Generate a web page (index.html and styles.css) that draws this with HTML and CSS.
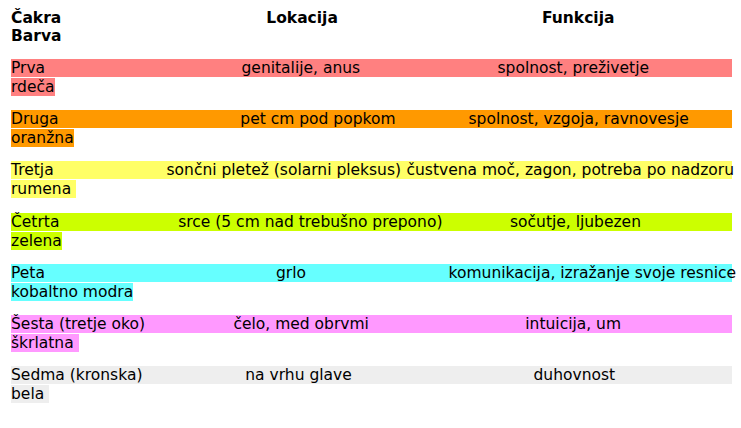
FILE: index.html
```html
<!DOCTYPE html>
<html lang="sl">
<head>
<meta charset="utf-8">
<title>Čakre</title>
<link rel="stylesheet" href="styles.css">
</head>
<body>
<div class="chart">
  <div class="group head">
    <div class="cols cols-head"><span>Čakra</span><span>Lokacija</span><span>Funkcija</span></div>
    <div class="color-line">Barva</div>
  </div>

  <div class="group">
    <div class="cols cols-1 red"><span>Prva</span><span>genitalije, anus</span><span>spolnost, preživetje</span></div>
    <div class="color-line"><span class="swatch red">rdeča</span></div>
  </div>

  <div class="group">
    <div class="cols cols-2 orange"><span>Druga</span><span>pet cm pod popkom</span><span>spolnost, vzgoja, ravnovesje</span></div>
    <div class="color-line"><span class="swatch orange">oranžna</span></div>
  </div>

  <div class="group">
    <div class="cols cols-3 yellow"><span>Tretja</span><span>sončni pletež (solarni pleksus)</span><span>čustvena moč, zagon, potreba po nadzoru</span></div>
    <div class="color-line"><span class="swatch yellow">rumena&nbsp;</span></div>
  </div>

  <div class="group">
    <div class="cols cols-4 lime"><span>Četrta</span><span>srce (5 cm nad trebušno prepono)</span><span>sočutje, ljubezen</span></div>
    <div class="color-line"><span class="swatch lime">zelena</span></div>
  </div>

  <div class="group">
    <div class="cols cols-5 cyan"><span>Peta</span><span>grlo</span><span>komunikacija, izražanje svoje resnice</span></div>
    <div class="color-line"><span class="swatch cyan">kobaltno modra</span></div>
  </div>

  <div class="group">
    <div class="cols cols-6 magenta"><span>Šesta (tretje oko)</span><span>čelo, med obrvmi</span><span>intuicija, um</span></div>
    <div class="color-line"><span class="swatch magenta">škrlatna&nbsp;</span></div>
  </div>

  <div class="group">
    <div class="cols cols-7 grey"><span>Sedma (kronska)</span><span>na vrhu glave</span><span>duhovnost</span></div>
    <div class="color-line"><span class="swatch grey">bela&nbsp;</span></div>
  </div>
</div>
</body>
</html>
```
FILE: styles.css
```css
html, body {
  margin: 0;
  padding: 0;
  background: #ffffff;
}

body {
  font-family: "DejaVu Sans", "Liberation Sans", sans-serif;
  font-size: 15.5px;
  line-height: 18px;
  color: #000000;
}

.chart {
  width: 721px;
  padding: 9px 0 0 11px;
}

.group {
  margin-bottom: 14.2px;
}

.head {
  font-weight: bold;
  margin-bottom: 14px;
}

.cols {
  display: grid;
  height: 18px;
  white-space: nowrap;
}

.color-line {
  padding-top: 1px;
  height: 18px;
  white-space: nowrap;
}

.head .color-line {
  padding-top: 0;
}

.swatch {
  display: inline-block;
  height: 18px;
  line-height: 18px;
  vertical-align: top;
}

.cols-head { grid-template-columns: 255.3px 275.7px 1fr; }
.cols-1 { grid-template-columns: 230.5px 256px 1fr; }
.cols-2 { grid-template-columns: 229.3px 228.2px 1fr; }
.cols-3 { grid-template-columns: 155.5px 240px 1fr; }
.cols-4 { grid-template-columns: 167.2px 331.8px 1fr; }
.cols-5 { grid-template-columns: 265px 172.6px 1fr; }
.cols-6 { grid-template-columns: 222.5px 291.8px 1fr; }
.cols-7 { grid-template-columns: 234.3px 288.2px 1fr; }

.red { background: #ff8080; }
.orange { background: #ff9900; }
.yellow { background: #ffff66; }
.lime { background: #ccff00; }
.cyan { background: #66ffff; }
.magenta { background: #ff99ff; }
.grey { background: #eeeeee; }
```
